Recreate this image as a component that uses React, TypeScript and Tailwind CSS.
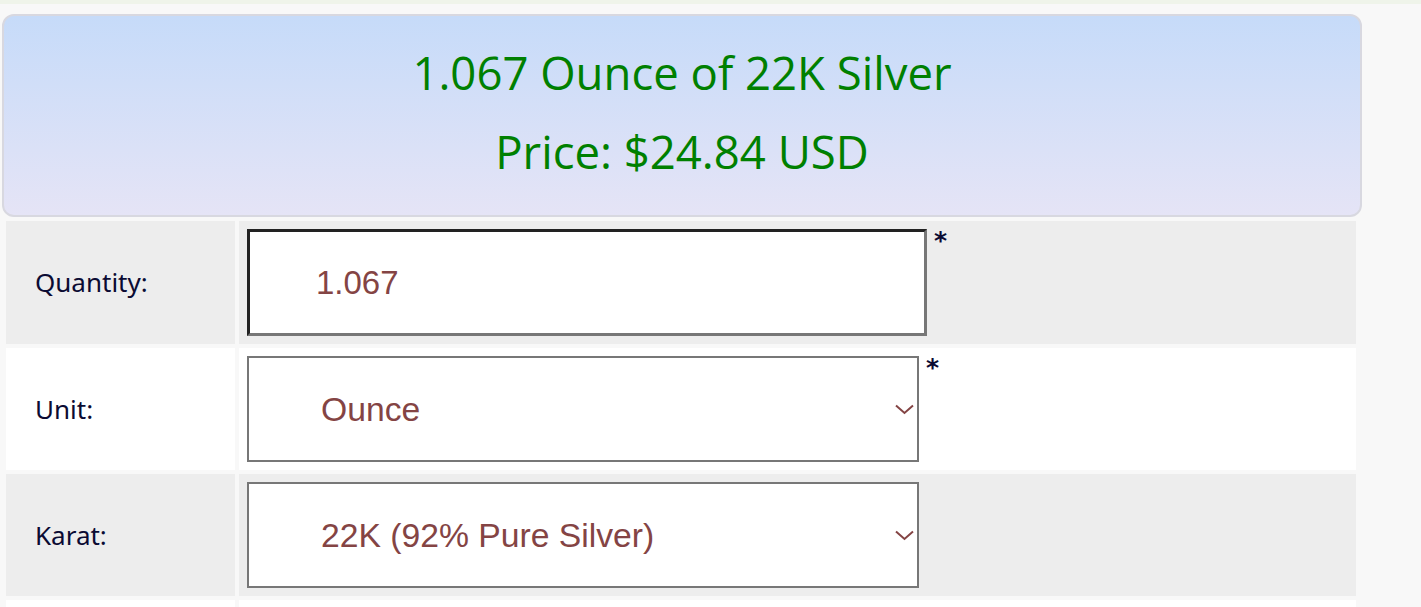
import React from "react";

const Chevron = () => (
  <svg
    className="pointer-events-none absolute right-[5px] top-[48px]"
    width="19"
    height="11"
    viewBox="0 0 19 11"
    fill="none"
  >
    <path d="M1 1.5 L9.5 9 L18 1.5" stroke="#844444" strokeWidth="2" />
  </svg>
);

const Star = () => (
  <span className="ml-[7px] -mt-[1px] self-start text-[25px] leading-none text-[#0b0b33] font-['DejaVu_Sans',sans-serif] font-bold">
    *
  </span>
);

export default function App() {
  return (
    <div className="min-h-[607px] w-full bg-[#f8f8f8] font-['Noto_Sans',sans-serif]">
      <div className="h-[4px] w-full bg-[#eff4ea]" />
      <div className="w-[1362px] pl-[2px] pt-[10px]">
        <div className="flex h-[203px] flex-col items-center rounded-[12px] border-2 border-[#d8d8e0] bg-gradient-to-b from-[#c6dbf9] to-[#e5e4f6] font-['Open_Sans',sans-serif] text-[45.5px] leading-none text-[#008000]">
          <div className="mt-[34px]">1.067 Ounce of 22K Silver</div>
          <div className="mt-[33px]">Price: $24.84 USD</div>
        </div>
        <div className="mt-[4px] grid grid-cols-[229px_1117px] gap-[4px] pl-[4px]">
          {/* Row 1 */}
          <div className="flex h-[123px] items-center bg-[#ededed] pl-[29px] text-[26px] text-[#0b0b33]">
            Quantity:
          </div>
          <div className="flex h-[123px] items-start bg-[#ededed] pl-[8px] pt-[8px]">
            <input
              defaultValue="1.067"
              className="h-[107px] w-[680px] border-[3px] border-t-[#222222] border-l-[#222222] border-r-[#777777] border-b-[#777777] bg-white pl-[66px] font-['Liberation_Sans',sans-serif] text-[33px] text-[#844444] outline-none"
            />
            <Star />
          </div>
          {/* Row 2 */}
          <div className="flex h-[122px] items-center bg-white pl-[29px] text-[26px] text-[#0b0b33]">
            Unit:
          </div>
          <div className="flex h-[122px] items-start bg-white pl-[8px] pt-[8px]">
            <div className="relative">
              <select
                defaultValue="Ounce"
                className="h-[106px] w-[672px] appearance-none border-2 border-[#777777] bg-white pl-[72px] font-['Liberation_Sans',sans-serif] text-[33.7px] text-[#844444] outline-none"
              >
                <option>Ounce</option>
                <option>Gram</option>
              </select>
              <Chevron />
            </div>
            <Star />
          </div>
          {/* Row 3 */}
          <div className="flex h-[122px] items-center bg-[#ededed] pl-[29px] text-[26px] text-[#0b0b33]">
            Karat:
          </div>
          <div className="flex h-[122px] items-start bg-[#ededed] pl-[8px] pt-[8px]">
            <div className="relative">
              <select
                defaultValue="22K (92% Pure Silver)"
                className="h-[106px] w-[672px] appearance-none border-2 border-[#777777] bg-white pl-[72px] font-['Liberation_Sans',sans-serif] text-[33.7px] text-[#844444] outline-none"
              >
                <option>22K (92% Pure Silver)</option>
                <option>24K (100% Pure Silver)</option>
              </select>
              <Chevron />
            </div>
          </div>
          {/* Row 4 */}
          <div className="h-[122px] bg-white" />
          <div className="h-[122px] bg-white" />
        </div>
      </div>
    </div>
  );
}
